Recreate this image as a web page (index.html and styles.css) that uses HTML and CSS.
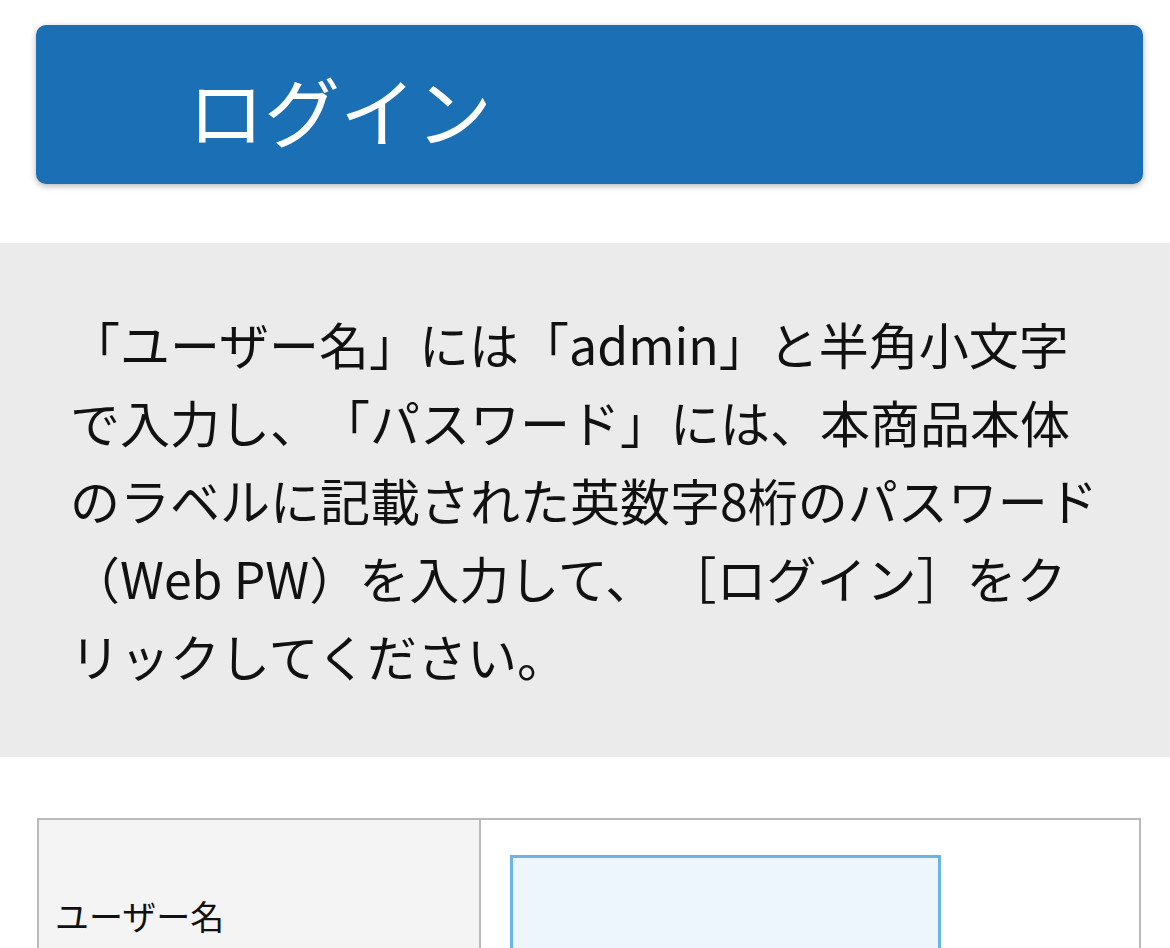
FILE: index.html
```html
<!DOCTYPE html>
<html>

<head>
    <meta charset="utf-8">
    <link rel="stylesheet" href="styles.css">
    <title>ログイン</title>
</head>

<body>
    <div class="title-bar">
        <h1>ログイン</h1>
    </div>

    <div class="notice">
        <p>「ユーザー名」には「admin」と半角小文字で入力し、「パスワード」には、本商品本体のラベルに記載された英数字8桁のパスワード（Web PW）を入力して、 ［ログイン］をクリックしてください。</p>
    </div>

    <form class="login-form" method="post" action="#">
        <table>
            <tr>
                <th><label for="username">ユーザー名</label></th>
                <td><input type="text" id="username" name="username"></td>
            </tr>
            <tr>
                <th><label for="password">パスワード</label></th>
                <td><input type="password" id="password" name="password"></td>
            </tr>
        </table>
    </form>
</body>

</html>
```

FILE: styles.css
```css
body {
    font-family: "Noto Sans CJK JP", "Noto Sans", sans-serif;
    margin: 0;
    padding: 0;
    background-color: #fff;
    color: #111;
    text-spacing-trim: space-all;
}

.title-bar {
    margin: 25px 27px 0 36px;
    height: 159px;
    background-color: #1a6fb5;
    border-radius: 10px;
    box-shadow: 0 2px 6px rgba(0, 0, 0, 0.3);
    display: flex;
    align-items: center;
    padding-left: 152px;
}

.title-bar h1 {
    margin: 0;
    color: #fff;
    font-size: 76px;
    font-weight: normal;
    line-height: 1;
    padding-top: 8px;
}

.notice {
    margin-top: 59px;
    background-color: #ebebeb;
    padding: 61px 60px 63px 70px;
}

.notice p {
    margin: 0;
    font-size: 50px;
    line-height: 78px;
}

.login-form {
    margin: 61px 29px 0 37px;
}

.login-form table {
    width: 100%;
    table-layout: fixed;
    border-collapse: collapse;
    border: 2px solid #bbb;
}

.login-form th,
.login-form td {
    border: 2px solid #bbb;
    padding: 35px 29px;
    text-align: left;
}

.login-form th {
    box-sizing: border-box;
    width: 442px;
    background-color: #f4f4f4;
    font-weight: normal;
    font-size: 34px;
    padding: 35px 16px;
}

.login-form input {
    display: block;
    width: 431px;
    height: 120px;
    box-sizing: border-box;
    background-color: #eef6fd;
    border: 3px solid #6ab4e8;
}
```
